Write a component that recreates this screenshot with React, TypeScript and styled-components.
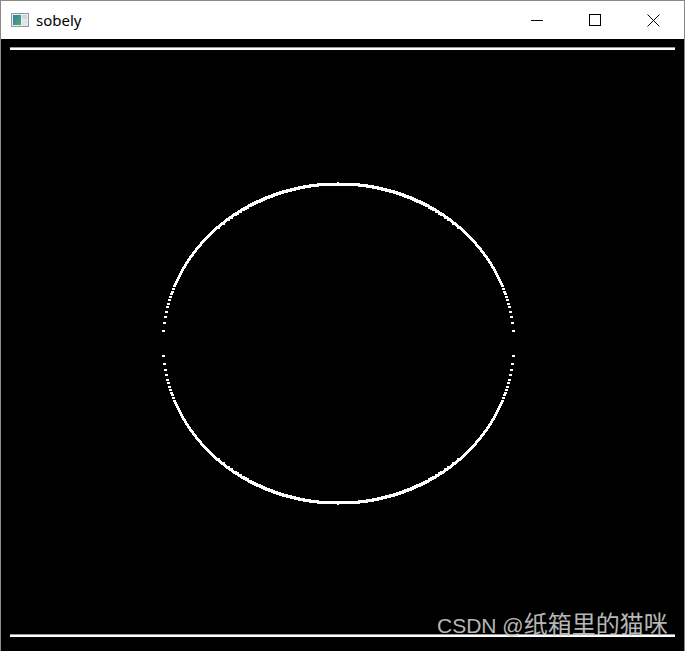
import styled, { createGlobalStyle } from "styled-components";

const GlobalStyle = createGlobalStyle`
  html, body {
    margin: 0;
    padding: 0;
    background: #ffffff;
  }
  #root {
    width: 685px;
    height: 651px;
  }
`

const Frame = styled.div`
  width: 685px;
  height: 651px;
  box-sizing: border-box;
  border: 1px solid #8a8a8a;
  border-bottom: none;
  display: flex;
  flex-direction: column;
  overflow: hidden;
`

const TitleBar = styled.div`
  height: 38px;
  flex-shrink: 0;
  background: #ffffff;
  display: flex;
  align-items: center;
`

const AppIcon = styled.div`
  width: 18px;
  height: 14px;
  margin: 0 7px 0 10px;
  display: flex;
`

const Title = styled.span`
  flex: 1;
  font-family: "Noto Sans", "Open Sans", sans-serif;
  font-size: 15px;
  color: #000000;
  line-height: 20px;
  margin-bottom: 1px;
`

const Controls = styled.div`
  display: flex;
  height: 100%;
  padding-right: 2px;
`

const ControlButton = styled.div`
  width: 58px;
  height: 100%;
  display: flex;
  align-items: center;
  justify-content: center;
`

const Canvas = styled.div`
  position: relative;
  flex: 1;
  background: #000000;
`

const Picture = styled.svg`
  display: block;
`

const Watermark = styled.div`
  position: absolute;
  left: 436px;
  top: 571px;
  font-family: "Liberation Sans", "Noto Sans CJK SC", sans-serif;
  font-size: 21px;
  line-height: 26px;
  color: rgba(255, 255, 255, 0.72);
  text-shadow: 0 0 1px rgba(0, 0, 0, 0.6);
  white-space: nowrap;
`

const Cjk = styled.span`
  font-family: "Noto Sans CJK SC", sans-serif;
  font-size: 24px;
`

// canvas is 683 wide, starts at page y=39
const CX = 337
const CY = 304
const RX = 175
const RY = 160

function edgeRects() {
  const rects: { x: number; y: number; w: number; h: number }[] = []
  const xAt = (d: number) => Math.round(RX * Math.sqrt(Math.max(0, 1 - (d / RY) * (d / RY))))
  for (let d = -RY; d <= 0; d++) {
    const prev = d === -RY ? -1 : xAt(d - 1)
    const cur = xAt(d)
    if (cur <= prev) continue
    const h = cur - prev > 1 ? 3 : 2
    const top = CY + d - 1
    const bottom = CY - d - (h - 2)
    if (prev < 0) {
      rects.push({ x: CX - cur - 1, y: top, w: 2 * cur + 2, h })
      rects.push({ x: CX - cur - 1, y: bottom, w: 2 * cur + 2, h })
    } else {
      const w = cur - prev + 2
      rects.push({ x: CX - cur - 1, y: top, w, h })
      rects.push({ x: CX + prev, y: top, w, h })
      rects.push({ x: CX - cur - 1, y: bottom, w, h })
      rects.push({ x: CX + prev, y: bottom, w, h })
    }
  }
  return rects
}

const rects = edgeRects()

export default function App() {
  return (
    <>
      <GlobalStyle />
      <Frame>
        <TitleBar>
          <AppIcon>
            <svg width="18" height="14" viewBox="0 0 18 14">
              <defs>
                <linearGradient id="ic" x1="0" y1="0" x2="1" y2="1">
                  <stop offset="0" stopColor="#2f7fb0" />
                  <stop offset="1" stopColor="#5ba86a" />
                </linearGradient>
              </defs>
              <rect x="0.5" y="0.5" width="17" height="13" fill="#e8ecef" stroke="#8c9aa4" />
              <rect x="2" y="2" width="8" height="10" fill="url(#ic)" />
              <rect x="11" y="2" width="5" height="4" fill="#cfd8dc" />
              <rect x="11" y="7" width="5" height="5" fill="#dfe6e9" />
            </svg>
          </AppIcon>
          <Title>sobely</Title>
          <Controls>
            <ControlButton>
              <svg width="12" height="12" viewBox="0 0 12 12">
                <path d="M0 6.5H12" stroke="#000" strokeWidth="1" />
              </svg>
            </ControlButton>
            <ControlButton>
              <svg width="12" height="12" viewBox="0 0 12 12">
                <rect x="0.5" y="0.5" width="11" height="11" fill="none" stroke="#000" strokeWidth="1" />
              </svg>
            </ControlButton>
            <ControlButton>
              <svg width="13" height="13" viewBox="0 0 13 13">
                <path d="M0.5 0.5L12.5 12.5M12.5 0.5L0.5 12.5" stroke="#000" strokeWidth="1" />
              </svg>
            </ControlButton>
          </Controls>
        </TitleBar>
        <Canvas>
          <Picture width="683" height="612" viewBox="0 0 683 612" shapeRendering="crispEdges">
            <rect x="9" y="8" width="665" height="1" fill="#9a9a9a" />
            <rect x="9" y="9" width="665" height="2" fill="#ffffff" />
            <rect x="9" y="595" width="665" height="1" fill="#9a9a9a" />
            <rect x="9" y="596" width="665" height="2" fill="#ffffff" />
            {rects.map((r, i) => (
              <rect key={i} x={r.x} y={r.y} width={r.w} height={r.h} fill="#ffffff" />
            ))}
          </Picture>
          <Watermark>
            CSDN @<Cjk>纸箱里的猫咪</Cjk>
          </Watermark>
        </Canvas>
      </Frame>
    </>
  )
}
